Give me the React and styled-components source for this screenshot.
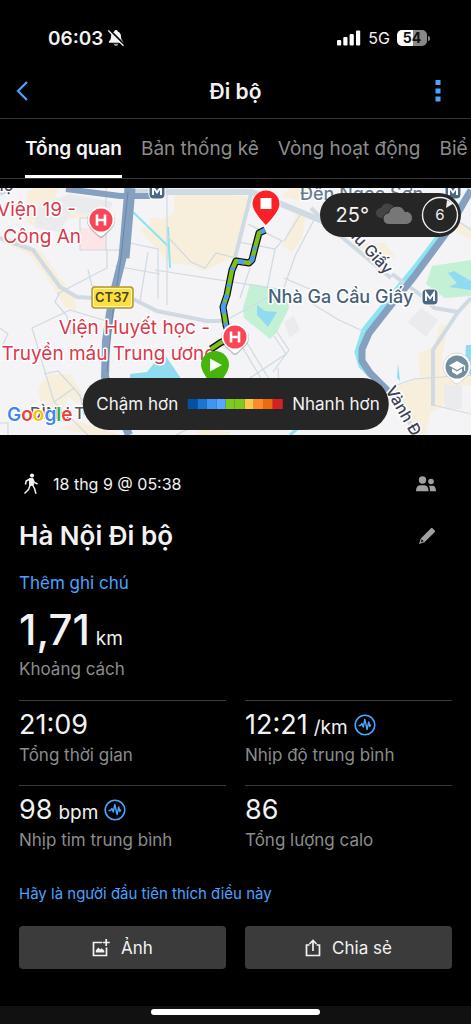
import React from "react";
import styled, { createGlobalStyle } from "styled-components";

const App = () => {
  return (
    <Page>
      <Global />
      <Status>
        <Clock>
          <span>06:03</span>
          <BellOff />
        </Clock>
        <Signal>
          <Bars />
          <span>5G</span>
          <Battery />
        </Signal>
      </Status>

      <Header>
        <IconButton aria-label="Quay lại">
          <svg width="14" height="22" viewBox="0 0 14 22">
            <path d="M12 2 L3 11 L12 20" fill="none" stroke="#4ba3ff" strokeWidth="2.2" />
          </svg>
        </IconButton>
        <Title>Đi bộ</Title>
        <IconButton aria-label="Thêm">
          <svg width="6" height="22" viewBox="0 0 6 22">
            <path d="M0.500 0h5v5h-5zM0.500 8.500h5v5h-5zM0.500 16.500h5v5h-5z" fill="#4ba3ff" />
          </svg>
        </IconButton>
      </Header>

      <Tabs>
        <Tab $active>Tổng quan</Tab>
        <Tab>Bản thống kê</Tab>
        <Tab>Vòng hoạt động</Tab>
        <Tab>Biể</Tab>
      </Tabs>

      <MapBox>
        <MapDrawing />
        <Weather>
          <span>25°</span>
          <Clouds />
          <Wind />
        </Weather>
        <Legend>
          <span>Chậm hơn</span>
          <Scale>
            {speeds.map((color, i) => (
              <Step key={i} $color={color} />
            ))}
          </Scale>
          <span>Nhanh hơn</span>
        </Legend>
      </MapBox>

      <Details>
        <Row>
          <When>
            <Walker />
            <span>18 thg 9 @ 05:38</span>
          </When>
          <People />
        </Row>
        <NameRow>
          <Name>Hà Nội Đi bộ</Name>
          <SmallButton aria-label="Chỉnh sửa">
            <Pencil />
          </SmallButton>
        </NameRow>
        <Note href="#note">Thêm ghi chú</Note>
        <Distance>
          <span>1,71</span>
          <Unit>km</Unit>
        </Distance>
        <Label>Khoảng cách</Label>

        <Grid>
          {stats.map((s) => (
            <Stat key={s.label}>
              <Value>
                <span>{s.value}</span>
                {s.unit && <Unit>{s.unit}</Unit>}
                {s.wave && <Wave />}
              </Value>
              <Label>{s.label}</Label>
            </Stat>
          ))}
        </Grid>

        <Like href="#like">Hãy là người đầu tiên thích điều này</Like>

        <Actions>
          <Action>
            <PhotoIcon />
            Ảnh
          </Action>
          <Action>
            <ShareIcon />
            Chia sẻ
          </Action>
        </Actions>
      </Details>

      <Bottom>
        <Indicator />
      </Bottom>
    </Page>
  );
};

export default App;

const speeds = [
  "#0052a5",
  "#1976d2",
  "#3d96f5",
  "#56a8ff",
  "#7dc91e",
  "#7dc91e",
  "#ffc848",
  "#ff8a28",
  "#ec6a10",
  "#d62024",
];

const stats = [
  { value: "21:09", label: "Tổng thời gian" },
  { value: "12:21", unit: "/km", wave: true, label: "Nhịp độ trung bình" },
  { value: "98", unit: "bpm", wave: true, label: "Nhịp tim trung bình" },
  { value: "86", label: "Tổng lượng calo" },
];

const BellOff = () => (
  <svg width="18" height="18" viewBox="0 0 18 18">
    <path
      d="M9 1c-1 0-1.600.6-1.700 1.400C5 3.100 4 5 4 7.500c0 2.500-.6 3.500-1.900 4.700-.6.6-.4 1.600.5 1.600h12.800c.9 0 1.100-1 .5-1.600C14.600 11 14 10 14 7.500c0-2.500-1-4.400-3.300-5.100C10.600 1.600 10 1 9 1z"
      fill="#f5f5f5"
    />
    <path d="M6.600 14.800h4.800C11.200 16 10.300 17 9 17s-2.200-1-2.400-2.200z" fill="#9a9a9a" />
    <path d="M2.400 0.800 L17.400 15.800" stroke="#000" strokeWidth="2" />
    <path d="M1.300 1.500 L16.500 16.700" stroke="#f5f5f5" strokeWidth="1.300" />
  </svg>
);

const Bars = () => (
  <svg width="24" height="16" viewBox="0 0 24 16" fill="#fff">
    <rect x="0" y="10" width="4.200" height="5.500" rx="1" />
    <rect x="6.300" y="7" width="4.200" height="8.500" rx="1" />
    <rect x="12.600" y="4" width="4.200" height="11.500" rx="1" />
    <rect x="19" y="0.500" width="4.200" height="15" rx="1" />
  </svg>
);

const Battery = () => (
  <BatteryBox>
    <Charge>54</Charge>
    <Tip />
  </BatteryBox>
);

const Clouds = () => (
  <svg width="38" height="24" viewBox="0 0 38 24">
    <path d="M5 15a5 5 0 0 1 0-10 7 7 0 0 1 12-2 5 5 0 0 1 3 6l-6 6z" fill="#444" />
    <path
      d="M13 21.500a5.800 5.800 0 0 1-.4-11.600 8.600 8.600 0 0 1 16.300-1.500 6.600 6.600 0 0 1 2 13.100z"
      fill="#777"
      stroke="#262626"
      strokeWidth="1"
    />
  </svg>
);

const Wind = () => (
  <svg width="38" height="38" viewBox="0 0 38 38">
    <circle cx="19" cy="19" r="17.500" fill="none" stroke="#eee" strokeWidth="1.400" />
    <path d="M25 12 L26 4 L32.500 7.500 Z" fill="#eee" />
    <text x="19" y="24" textAnchor="middle" fontSize="15" fill="#f0f0f0">
      6
    </text>
  </svg>
);

const Walker = () => (
  <svg width="16" height="22" viewBox="0 0 16 22">
    <circle cx="9" cy="2.500" r="2.100" fill="#f2f2f2" />
    <path d="M6.500 5.500 L10 5.300 L10.500 12 L6.600 12.500 Z" fill="#f2f2f2" stroke="#f2f2f2" strokeLinejoin="round" />
    <path
      d="M7 6 L3.200 8 L2.400 11.500 M10 6.500 L11.300 9.300 L14.500 11 M7.200 12 L5.500 16.500 L1.500 20.500 M9.500 12 L11.500 15.500 L13 20.700"
      fill="none"
      stroke="#f2f2f2"
      strokeWidth="1.500"
      strokeLinejoin="round"
    />
  </svg>
);

const People = () => (
  <svg width="22" height="16" viewBox="0 0 22 16" fill="#a0a0a0">
    <circle cx="7.500" cy="4" r="3.700" />
    <circle cx="16" cy="5.500" r="2.800" />
    <path d="M1 15.300c0-4 1.500-6 4-6h4.500c2.500 0 4 2 4 6z" />
    <path d="M14 9.700h3.500c2.300 0 3.500 2 3.500 5.600h-6c0-2.300-.3-4-1-5.600z" />
  </svg>
);

const Pencil = () => (
  <svg width="18" height="18" viewBox="0 0 18 18">
    <path d="M13 1.200a1 1 0 0 1 1.500 0l2.300 2.300a1 1 0 0 1 0 1.500L6.500 15.200 1 17l1.800-5.500z" fill="#a0a0a0" />
    <path d="M3.700 12.300 L5.700 14.300 L2.800 15.300 Z" fill="#000" />
  </svg>
);

const Wave = () => (
  <svg width="22" height="22" viewBox="0 0 22 22" fill="none" stroke="#4ba3ff">
    <circle cx="11" cy="11" r="9.800" strokeWidth="1.600" />
    <path
      d="M4.500 11.500h2L8 9.500l1.300 3.500 1.500-7.500 2.300 10 1.600-7.500 1.200 4.500 1.100-2"
      strokeWidth="1.400"
      strokeLinejoin="round"
    />
  </svg>
);

const PhotoIcon = () => (
  <svg width="18" height="18" viewBox="0 0 18 18">
    <path d="M10 3.500H1.500v13h13V8.500" fill="none" stroke="#f2f2f2" strokeWidth="1.700" />
    <path d="M3.800 13.500l0-2 2.500-3 2 2 1.500-1.300 2.500 2.500v1.800z" fill="#f2f2f2" />
    <path d="M14.200 0v7M10.700 3.500h7" stroke="#f2f2f2" strokeWidth="1.700" />
  </svg>
);

const ShareIcon = () => (
  <svg width="16" height="18" viewBox="0 0 16 18" fill="none" stroke="#f2f2f2" strokeWidth="1.700">
    <path d="M4.500 6H1.500v10.500h13V6h-3" />
    <path d="M8 12V2M4.500 5L8 1.500 11.500 5" />
  </svg>
);

const Hospital = ({ x, y }) => (
  <g transform={`translate(${x} ${y})`}>
    <path d="M-14 0a14 14 0 1 1 28 0c0 7-7 11-11 15.500q-3 3-6 0C-7 11-14 7-14 0z" fill="#0003" transform="translate(0 1)" />
    <path d="M-13.500 0a13.500 13.500 0 1 1 27 0c0 7-7 11-11 15q-2.500 2.500-5 0C-6.500 11-13.500 7-13.500 0z" fill="#fff" />
    <circle r="11.500" fill="#fb4658" />
    <path d="M-4-5.500v11M4-5.500v11M-4 0h8" stroke="#fff" strokeWidth="2.600" />
  </g>
);

const Metro = ({ x, y }) => (
  <g transform={`translate(${x} ${y})`}>
    <rect x="-8.500" y="-8.500" width="17" height="17" rx="5" fill="#fff" />
    <rect x="-7.500" y="-7.500" width="15" height="15" rx="4" fill="#4d6880" />
    <path d="M-4 4v-8L0 1.500 4-4v8" fill="none" stroke="#fff" strokeWidth="1.900" />
  </g>
);

const MapDrawing = () => (
  <MapSvg viewBox="0 0 471 247" preserveAspectRatio="xMidYMid slice">
    <rect width="471" height="247" fill="#f4f3f5" />

    {/* built-up areas */}
    <g fill="#f7eedb">
      <path d="M27 4l9-4h24l-6 9 56 10-2 14-30-4-40 12-12-8z" />
      <path d="M0 48l20 4 22 12 17 25 14 18 4 16-12-4-18-30-18-23-15-6z" />
      <path d="M140 42l34-16V2l74 7-14 60-30 14-14-6-20-2z" />
      <path d="M150 30h10v16l-10-6zM290 0h18l-4 14-22-6zM296 26l10-2-4 26-10 14-10-6zM345 55l40 0 10 14-16 6-20-16z" />
      <path d="M38 200l12-14 20 0 14 22-6 8-10-8-4 14-10 6-14-18z" />
      <path d="M392 200l28-10-2-24 16-8 6-22 8 2-6 30v16l29 4v10h-22l-8 22-10 4-6 23h-12z" />
      <path d="M60 240l20-6 40 13H90zM200 240l30 4v3h-34zM455 32l16 8v12l-14-8z" />
    </g>
    <path d="M35 20l34-14 44 8-6 14-36-4-12 20-24-4z" fill="#ebebee" />
    <path d="M80 40h27v22H80z" fill="#fde5e6" />
    <path d="M408 134l13-14 17 12-12 17zM444 197h18v24h-18zM284 134l10-6 6 14-10 8z" fill="#ebebee" />

    {/* parks and water */}
    <path d="M250 96l36 6 3 18-12 24-7 7-26-21-1-10z" fill="#c4f0d6" />
    <path d="M257 117l8 6 12 1-9 15-11-12z" fill="#8fdcf0" />
    <path d="M426 96l6-18 39-6v36l-26 2z" fill="#c4f0d6" />
    <path d="M448 85l6-2 17 10v9l-22-3 8-4z" fill="#8fdcf0" />
    <path d="M130 186l17-2 16-20 17 25v20h-50zM466 157h5v32l-6-14zM398 175l2 18-3-3z" fill="#8fdcf0" />
    <path d="M133 24l35 34M168 39l2 41" stroke="#8be4f1" strokeWidth="2" fill="none" />
    <path d="M468 6l-26 38-26 34-28 34-24 30-7 22 4 14 10 10" stroke="#8be4f1" strokeWidth="5" fill="none" />
    <path d="M290 247l14-12" stroke="#8be4f1" strokeWidth="3" fill="none" />

    {/* small streets */}
    <g fill="none" stroke="#cfdae3" strokeWidth="1.200">
      <path d="M80 62v-32h10M80 62h44M107 62v18l-50 26M88 82l4 16 18 2M60 104l-5 10 12 14 4 18M106 0v62" />
      <path d="M120 53l38 8v50M148 64l-8 49M115 78l45 8M167 0v117M167 48l24 26 14 6 11-15 20 5M155 82l130 20" />
      <path d="M248 36l34 17-7 8-36-7M284 53l18-29M275 61l-8 40M315 30l-20 38-14 40M250 80l-10 30" />
      <path d="M70 122l-38 18 22 74 34 33M70 122l40 12M44 186l14-3 22 24 4 20M54 214l20-14 20 28M0 140l8 6-6 12M0 235h8v12" />
      <path d="M230 130l44-24M238 152l30 50M244 150l28 46M274 148l12 18-60 40M277 144l12 18-16 22M278 180l2 40" />
      <path d="M311 115l28 17 26 12M391 199l23-8 57-4M433 217l38 9M311 200l20 30M176 247l20-10M284 90l28 12M440 20l31 22" />
    </g>
    <g fill="none" stroke="#cfdae3" strokeWidth="4">
      <path d="M0 50l33 12 27 37 17 10 16 1M133 111l24 12 50 10 18 0M458 124l-25 38v56M392 86l30 22 12 12 24 4 13-14" />
      <path d="M252 2l-17 68-12 50M311 20l20 20 60 50M388 203l30 44M0 6l12-6" />
    </g>
    <path d="M133 4h119l63 26 20 8" fill="none" stroke="#cfdae3" strokeWidth="6" />

    {/* main roads */}
    <g fill="none" stroke="#86a0c0" strokeLinejoin="round">
      <path d="M66 1l54 7 30 0" strokeWidth="6" />
      <path d="M130 0l-6 70" strokeWidth="11" />
      <path d="M125 60l-10 40-5 25-4 28-1 36 24 58" strokeWidth="8" />
      <path d="M471 2l-24 42-34 46-22 27-22 28-7 16 0 12 8 12 18 18" strokeWidth="7" />
    </g>
    <path d="M128 4l-7 66-8 54-6 60" fill="none" stroke="#6886aa" strokeWidth="1" />

    {/* place names */}
    <g stroke="#fff" strokeWidth="3" paintOrder="stroke" strokeLinejoin="round" fontWeight="500">
      <g fontSize="19" fontWeight="400" fill="#d9394c">
        <text x="76" y="28" textAnchor="end">Viện 19 -</text>
        <text x="81" y="55" textAnchor="end">Công An</text>
        <text x="210" y="146" textAnchor="end">Viện Huyết học -</text>
        <text x="216" y="172" textAnchor="end">Truyền máu Trung ương</text>
      </g>
      <g fontSize="18" fill="#46607a">
        <text x="300" y="12" opacity="0.800">Đền Ngọc Sơn</text>
        <text x="268" y="115">Nhà Ga Cầu Giấy</text>
      </g>
      <g fontSize="16" fill="#3c4257">
        <text x="-6" y="3">họ</text>
        <text transform="translate(339 37) rotate(47)">Cầu Giấy</text>
        <text transform="translate(385 202) rotate(60)">Vành Đai</text>
        <text x="30" y="231" fill="#555">ĐÌNH T</text>
      </g>
    </g>

    <Metro x={157} y={3} />
    <Metro x={430} y={109} />
    <Metro x={453} y={3} />

    <rect x="92" y="99" width="41" height="21" rx="3" fill="#ffdf3d" stroke="#b29a3a" strokeWidth="1.500" />
    <rect x="93.500" y="100.500" width="38" height="18" rx="2" fill="none" stroke="#fff8c8" />
    <text x="112" y="114" textAnchor="middle" fontSize="13" fontWeight="600" fill="#45432d">CT37</text>

    {/* track */}
    <g fill="none" strokeLinejoin="round">
      <path d="M265 42l-6 3-4 15-3 12-3 3-13-2-4 9-5 25-4 12 3 18 4 13-10 5-9 6" stroke="#111" strokeWidth="7" />
      <path d="M265 42l-6 3-4 15-3 12-3 3-13-2-4 9-5 25-4 12 3 18 4 13-10 5-9 6" stroke="#7cbf20" strokeWidth="4.500" />
      <path
        d="M265 42l-6 3-4 15-3 12-3 3-13-2-4 9-5 25-4 12 3 18 4 13"
        stroke="#4b9bf5"
        strokeWidth="4.500"
        strokeDasharray="5 16 3 6 7 7 6 9 3 14 3 8 5 3 12 9 20 3"
      />
    </g>

    <Hospital x={101} y={32} />
    <Hospital x={235} y={149} />
    <path d="M201 177a14 14 0 1 1 28 0c0 8-14 24-14 24s-14-16-14-24z" fill="#45b50b" />
    <path d="M210 170.500l12 6.500-12 6.500z" fill="#fff" />
    <path d="M251.500 17a14.500 14.500 0 1 1 29 0c0 8-14.500 22-14.500 22s-14.500-14-14.500-22z" fill="#fff" />
    <path d="M252.500 16a13.500 13.500 0 1 1 27 0c0 8-13.500 21-13.500 21s-13.500-13-13.500-21z" fill="#fc2027" />
    <path d="M260.500 10h11v11h-11z" fill="#fff" />

    <g transform="translate(457 179)">
      <path d="M-14 0a14 14 0 1 1 28 0c0 7-7 11-11 15.500q-3 3-6 0C-7 11-14 7-14 0z" fill="#fff" stroke="#0002" />
      <circle r="11.500" fill="#738f9d" />
      <path d="M-8-1.500l8-4.500 8 4.500-8 4.500zM-5 1.500v3.500l5 3 5-3V1.500l-5 3zM7-1.500h1.200V4H7z" fill="#fff" />
    </g>

    <text x="7" y="233" fontSize="19" fontWeight="600" stroke="#fff" strokeWidth="2" paintOrder="stroke">
      <tspan fill="#4285f4">G</tspan>
      <tspan fill="#ea4335">o</tspan>
      <tspan fill="#fbbc05">o</tspan>
      <tspan fill="#4285f4">g</tspan>
      <tspan fill="#34a853">l</tspan>
      <tspan fill="#ea4335">e</tspan>
    </text>
  </MapSvg>
);

const Global = createGlobalStyle`
  body {
    margin: 0;
    background: #000;
    font-family: Inter, "Noto Sans", sans-serif;
    color: #f2f2f2;
  }
  * {
    box-sizing: border-box;
  }
  svg {
    display: block;
    flex-shrink: 0;
  }
  button {
    font-family: inherit;
    color: inherit;
    border: 0;
    background: none;
    padding: 0;
  }
  a {
    color: #4ba3ff;
    text-decoration: none;
  }
`;
const Page = styled.div`
  min-height: 100vh;
  display: flex;
  flex-direction: column;
  overflow: hidden;
`;
const Status = styled.div`
  height: 64px;
  padding: 12px 41px 0 48px;
  display: flex;
  align-items: center;
  justify-content: space-between;
`;
const Clock = styled.div`
  display: flex;
  align-items: center;
  gap: 4px;
  font-size: 19px;
  font-weight: 600;
`;
const Signal = styled.div`
  display: flex;
  align-items: center;
  gap: 7px;
  font-size: 16px;
`;
const BatteryBox = styled.div`
  display: flex;
  align-items: center;
  gap: 1px;
`;
const Charge = styled.div`
  width: 30px;
  height: 16px;
  border-radius: 5px;
  background: linear-gradient(90deg, #fff 54%, #888 54%);
  color: #111;
  font-size: 14px;
  font-weight: 700;
  line-height: 16px;
  text-align: center;
`;
const Tip = styled.div`
  width: 2px;
  height: 5px;
  border-radius: 0 2px 2px 0;
  background: #888;
`;
const Header = styled.header`
  height: 55px;
  padding: 0 15px;
  display: flex;
  align-items: center;
  justify-content: space-between;
  border-bottom: 1px solid #363636;
`;
const IconButton = styled.button`
  width: 36px;
  height: 36px;
  display: flex;
  align-items: center;
  justify-content: center;
  &:first-child {
    justify-content: flex-start;
  }
`;
const Title = styled.h1`
  margin: 0;
  font-size: 21px;
  font-weight: 600;
`;
const Tabs = styled.nav`
  height: 60px;
  padding-left: 25px;
  display: flex;
  gap: 19px;
  border-bottom: 1px solid #363636;
  overflow: hidden;
`;
const Tab = styled.button`
  flex-shrink: 0;
  white-space: nowrap;
  font-size: 19px;
  padding-top: 3px;
  font-weight: ${(p) => (p.$active ? 600 : 400)};
  color: ${(p) => (p.$active ? "#f5f5f5" : "#8c8c8c")};
  border-bottom: 3px solid ${(p) => (p.$active ? "#fff" : "transparent")};
`;
const MapBox = styled.section`
  position: relative;
  margin-top: 9px;
`;
const MapSvg = styled.svg`
  width: 100%;
  height: 247px;
`;
const Weather = styled.div`
  position: absolute;
  top: 5px;
  right: 10px;
  height: 44px;
  padding: 0 2px 0 16px;
  display: flex;
  align-items: center;
  gap: 7px;
  border-radius: 22px;
  background: #262626;
  font-size: 20px;
`;
const Legend = styled.div`
  position: absolute;
  left: 50%;
  bottom: 5px;
  transform: translateX(-50%);
  height: 52px;
  padding: 0 9px 0 14px;
  display: flex;
  align-items: center;
  gap: 10px;
  border-radius: 26px;
  background: #262626;
  font-size: 17px;
  white-space: nowrap;
`;
const Scale = styled.div`
  width: 94px;
  height: 10px;
  display: flex;
`;
const Step = styled.div`
  flex: 1;
  background: ${(p) => p.$color};
`;
const Details = styled.main`
  padding: 36px 19px 0;
  display: flex;
  flex-direction: column;
`;
const Row = styled.div`
  height: 26px;
  padding: 0 15px 0 4px;
  display: flex;
  align-items: center;
  justify-content: space-between;
`;
const When = styled.div`
  display: flex;
  align-items: center;
  gap: 14px;
  font-size: 16px;
`;
const NameRow = styled.div`
  margin-top: 20px;
  padding-right: 16px;
  display: flex;
  align-items: center;
  justify-content: space-between;
`;
const Name = styled.h2`
  margin: 0;
  font-size: 26px;
  line-height: 38px;
  font-weight: 600;
`;
const SmallButton = styled.button`
  display: flex;
`;
const Note = styled.a`
  margin-top: 16px;
  align-self: flex-start;
  font-size: 17px;
  line-height: 24px;
`;
const Distance = styled.div`
  margin: 16px 0 8px;
  height: 38px;
  display: flex;
  align-items: baseline;
  gap: 6px;
  font-size: 42px;
  line-height: 38px;
  font-weight: 500;
`;
const Unit = styled.span`
  font-size: 19px;
  font-weight: 400;
`;
const Label = styled.div`
  font-size: 17px;
  line-height: 24px;
  color: #8c8c8c;
`;
const Grid = styled.div`
  margin-top: 19px;
  display: grid;
  grid-template-columns: 1fr 1fr;
  column-gap: 19px;
`;
const Stat = styled.div`
  height: 85px;
  padding-top: 6px;
  border-top: 1px solid #3a3a3a;
`;
const Value = styled.div`
  height: 36px;
  display: flex;
  align-items: baseline;
  gap: 6px;
  font-size: 27px;
  line-height: 36px;
  svg {
    align-self: center;
  }
`;
const Like = styled.a`
  margin-top: 12px;
  align-self: flex-start;
  font-size: 15px;
  line-height: 24px;
`;
const Actions = styled.div`
  margin-top: 20px;
  display: grid;
  grid-template-columns: 1fr 1fr;
  gap: 19px;
`;
const Action = styled.button`
  height: 43px;
  display: flex;
  align-items: center;
  justify-content: center;
  gap: 11px;
  border-radius: 4px;
  background: #3b3b3b;
  font-size: 17px;
`;
const Bottom = styled.footer`
  margin-top: auto;
  height: 18px;
  padding-top: 3px;
  display: flex;
  justify-content: center;
  background: #111;
`;
const Indicator = styled.div`
  width: 36%;
  height: 6px;
  border-radius: 3px;
  background: #fff;
`;
